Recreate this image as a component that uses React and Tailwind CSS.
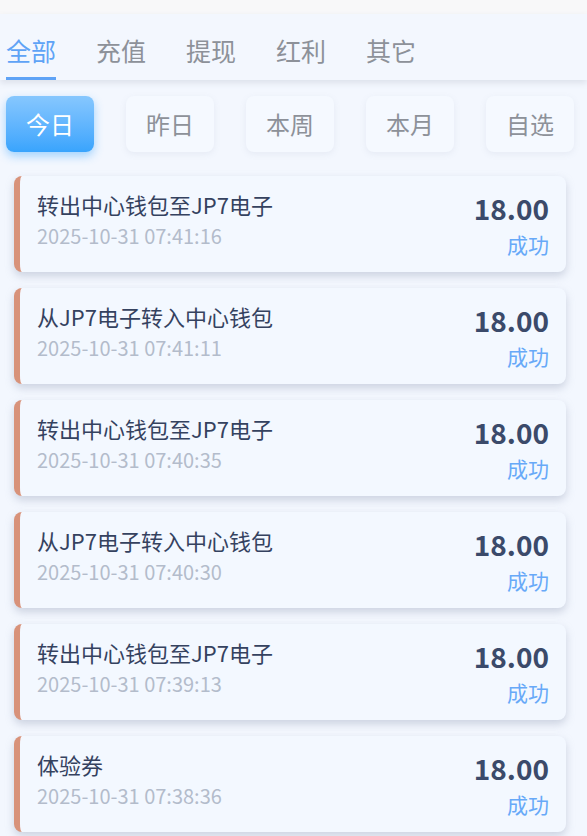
import React from "react";

const tabs = ["全部", "充值", "提现", "红利", "其它"];
const ranges = ["今日", "昨日", "本周", "本月", "自选"];
const rows = [
  ["转出中心钱包至JP7电子", "2025-10-31 07:41:16"],
  ["从JP7电子转入中心钱包", "2025-10-31 07:41:11"],
  ["转出中心钱包至JP7电子", "2025-10-31 07:40:35"],
  ["从JP7电子转入中心钱包", "2025-10-31 07:40:30"],
  ["转出中心钱包至JP7电子", "2025-10-31 07:39:13"],
  ["体验券", "2025-10-31 07:38:36"],
];

export default function App() {
  return (
    <div className="w-[587px] h-[836px] overflow-hidden bg-[#f3f7fe] font-['Noto_Sans_CJK_SC',sans-serif]">
      <div className="h-[14px] bg-[#f8f8f9]" />
      <div className="relative z-10 h-[66px] flex items-end gap-[40px] px-1.5 bg-[#f3f7fe] shadow-[0_3px_6px_rgba(120,130,150,0.18)]">
        {tabs.map((t, i) => (
          <div key={t} className="flex flex-col">
            <span
              className={`text-[25px] leading-8 ${i === 0 ? "text-[#5fa3f6]" : "text-[#8d9199]"}`}
            >
              {t}
            </span>
            <div className={`mt-[11px] h-[3px] w-full ${i === 0 ? "bg-[#5fa3f6]" : "bg-transparent"}`} />
          </div>
        ))}
      </div>
      <div className="flex gap-8 pl-1.5 pt-4">
        {ranges.map((r, i) => (
          <div
            key={r}
            className={
              i === 0
                ? "w-[88px] h-14 rounded-lg flex items-center justify-center text-[24px] text-white bg-gradient-to-b from-[#86c7fe] to-[#38a4fd] shadow-[0_4px_10px_rgba(58,165,253,0.45)]"
                : "w-[88px] h-14 rounded-lg flex items-center justify-center text-[24px] text-[#8d9199] bg-[#f5f9ff] shadow-[0_2px_6px_rgba(140,150,170,0.12)]"
            }
          >
            {r}
          </div>
        ))}
      </div>
      <div className="flex flex-col gap-4 pl-3.5 pr-[21px] pt-6">
        {rows.map(([title, date], i) => (
          <div
            key={i}
            className="h-24 shrink-0 rounded-lg border-l-[6px] border-[#d8927a] bg-[#f3f8ff] shadow-[0_4px_8px_rgba(140,150,175,0.38)] flex justify-between pl-[17px] pr-[17px] pt-[13px]"
          >
            <div className="flex flex-col">
              <span className="text-[22px] leading-[30px] text-[#35425f]">{title}</span>
              <span className="mt-[4px] text-[20px] leading-[26px] text-[#b3bccb]">{date}</span>
            </div>
            <div className="flex flex-col items-end pt-px">
              <span className="text-[28px] leading-9 font-bold text-[#3b4a6a]">18.00</span>
              <span className="mt-1 text-[21px] leading-7 text-[#67a9f8]">成功</span>
            </div>
          </div>
        ))}
      </div>
    </div>
  );
}
